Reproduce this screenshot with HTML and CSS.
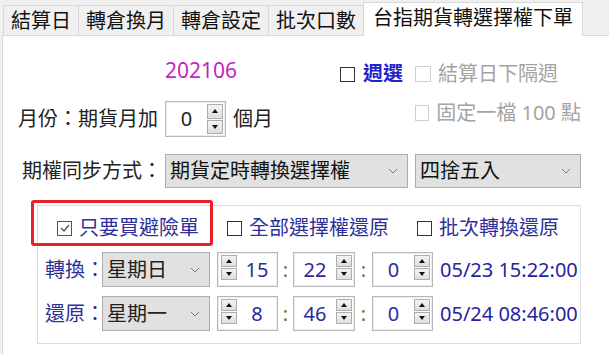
FILE: index.html
```html
<!DOCTYPE html>
<html lang="zh-Hant">
<head>
    <meta charset="UTF-8">
    <title>台指期貨轉選擇權下單</title>
    <link rel="stylesheet" href="styles.css">
</head>
<body>
    <div class="tabs">
        <div class="tab first">結算日</div>
        <div class="tab">轉倉換月</div>
        <div class="tab">轉倉設定</div>
        <div class="tab">批次口數</div>
        <div class="tab active">台指期貨轉選擇權下單</div>
    </div>

    <div class="panel">
        <div class="row row-a">
            <div class="col1"></div>
            <div class="col2 split">
                <span class="month">202106</span>
                <label class="check weekly"><span class="cb"></span>週選</label>
            </div>
            <div class="col3">
                <label class="check disabled"><span class="cb"></span>結算日下隔週</label>
            </div>
        </div>

        <div class="row row-b">
            <div class="col1 label-month">月份：期貨月加</div>
            <div class="col2 inline">
                <div class="spin spin-top">
                    <span class="spin-value">0</span>
                    <div class="spin-btns">
                        <span class="spin-btn"><i class="up"></i></span>
                        <span class="spin-btn"><i class="down"></i></span>
                    </div>
                </div>
                <span class="unit">個月</span>
            </div>
            <div class="col3 top">
                <label class="check disabled"><span class="cb"></span>固定一檔 100 點</label>
            </div>
        </div>

        <div class="row row-c">
            <div class="col1 label-sync">期權同步方式：</div>
            <div class="col2">
                <div class="select">
                    <span>期貨定時轉換選擇權</span>
                    <svg width="10" height="6" viewBox="0 0 10 6"><polyline points="1,1 5,5 9,1" fill="none" stroke="#7a7a7a" stroke-width="1"/></svg>
                </div>
            </div>
            <div class="col3">
                <div class="select">
                    <span>四捨五入</span>
                    <svg width="10" height="6" viewBox="0 0 10 6"><polyline points="1,1 5,5 9,1" fill="none" stroke="#7a7a7a" stroke-width="1"/></svg>
                </div>
            </div>
        </div>

        <div class="group">
            <div class="highlight"></div>
            <div class="checks">
                <label class="check item-a"><span class="cb checked"><svg width="12" height="12" viewBox="0 0 12 12"><polyline points="2,6 5,9 10,3" fill="none" stroke="#555" stroke-width="1.4"/></svg></span>只要買避險單</label>
                <label class="check item-b"><span class="cb"></span>全部選擇權還原</label>
                <label class="check"><span class="cb"></span>批次轉換還原</label>
            </div>

            <div class="time-row first-row">
                <span class="time-label">轉換：</span>
                <div class="select day">
                    <span>星期日</span>
                    <svg width="10" height="6" viewBox="0 0 10 6"><polyline points="1,1 5,5 9,1" fill="none" stroke="#7a7a7a" stroke-width="1"/></svg>
                </div>
                <div class="spin spin-left">
                    <div class="spin-btns">
                        <span class="spin-btn"><i class="up"></i></span>
                        <span class="spin-btn"><i class="down"></i></span>
                    </div>
                    <span class="spin-value">15</span>
                </div>
                <span class="colon">:</span>
                <div class="spin spin-mid">
                    <span class="spin-value">22</span>
                    <div class="spin-btns">
                        <span class="spin-btn"><i class="up"></i></span>
                        <span class="spin-btn"><i class="down"></i></span>
                    </div>
                </div>
                <span class="colon wide">:</span>
                <div class="spin spin-sec">
                    <span class="spin-value">0</span>
                    <div class="spin-btns">
                        <span class="spin-btn"><i class="up"></i></span>
                        <span class="spin-btn"><i class="down"></i></span>
                    </div>
                </div>
                <span class="stamp">05/23 15:22:00</span>
            </div>

            <div class="time-row">
                <span class="time-label">還原：</span>
                <div class="select day">
                    <span>星期一</span>
                    <svg width="10" height="6" viewBox="0 0 10 6"><polyline points="1,1 5,5 9,1" fill="none" stroke="#7a7a7a" stroke-width="1"/></svg>
                </div>
                <div class="spin spin-left">
                    <div class="spin-btns">
                        <span class="spin-btn"><i class="up"></i></span>
                        <span class="spin-btn"><i class="down"></i></span>
                    </div>
                    <span class="spin-value">8</span>
                </div>
                <span class="colon">:</span>
                <div class="spin spin-mid">
                    <span class="spin-value">46</span>
                    <div class="spin-btns">
                        <span class="spin-btn"><i class="up"></i></span>
                        <span class="spin-btn"><i class="down"></i></span>
                    </div>
                </div>
                <span class="colon wide">:</span>
                <div class="spin spin-sec">
                    <span class="spin-value">0</span>
                    <div class="spin-btns">
                        <span class="spin-btn"><i class="up"></i></span>
                        <span class="spin-btn"><i class="down"></i></span>
                    </div>
                </div>
                <span class="stamp">05/24 08:46:00</span>
            </div>
        </div>
    </div>
</body>
</html>
```

FILE: styles.css
```css
body {
    margin: 0;
    background: #f0f0f0;
    font-family: "Noto Sans", "Noto Sans CJK TC", sans-serif;
    font-size: 20px;
    line-height: 24px;
    color: #222;
}
.tabs {
    display: flex;
    align-items: flex-end;
    height: 35px;
    padding-left: 3px;
}
.tab {
    height: 29px;
    padding: 0 7px;
    display: flex;
    align-items: center;
    background: #f0f0f0;
    border-top: 1px solid #d9d9d9;
    border-right: 1px solid #d9d9d9;
    color: #111;
}
.tab.first {
    border-left: 1px solid #d9d9d9;
}
.tab.active {
    height: 30px;
    margin-left: -1px;
    margin-bottom: -1px;
    padding: 0 9px 3px;
    background: #fff;
    border-left: 1px solid #d9d9d9;
    position: relative;
}
.panel {
    margin-left: 2px;
    height: 319px;
    box-sizing: border-box;
    padding-top: 25px;
    background: #fff;
    border-top: 1px solid #d9d9d9;
    border-left: 1px solid #d9d9d9;
}
.row {
    display: flex;
}
.col1 {
    width: 162px;
    box-sizing: border-box;
    white-space: nowrap;
}
.col2 {
    width: 243px;
}
.col3 {
    width: 166px;
    margin-left: 7px;
}
.row-a {
    height: 26px;
    align-items: center;
}
.split {
    display: flex;
    justify-content: space-between;
    align-items: center;
    padding-right: 5px;
    box-sizing: border-box;
}
.month {
    color: #c424c4;
    font-size: 21px;
    margin-bottom: 8px;
}
.check {
    display: flex;
    align-items: center;
    gap: 7px;
    white-space: nowrap;
}
.cb {
    width: 15px;
    height: 15px;
    box-sizing: border-box;
    border: 1.5px solid #333;
    background: #fff;
    display: flex;
    align-items: center;
    justify-content: center;
}
.cb.checked {
    border-color: #555;
}
.weekly {
    gap: 8px;
    color: #2323c8;
    font-weight: 600;
}
.check.disabled {
    color: #a3a3a3;
}
.check.disabled .cb {
    border: 1px solid #cfcfcf;
    width: 16px;
    height: 16px;
}
.row-b {
    height: 36px;
    margin-top: 14px;
    align-items: center;
}
.label-month {
    padding-left: 15px;
}
.inline {
    display: flex;
    align-items: center;
    height: 100%;
}
.unit {
    margin-left: 7px;
}
.top {
    align-self: flex-start;
}
.row-c {
    height: 34px;
    margin-top: 17px;
    align-items: center;
}
.label-sync {
    padding-left: 19px;
}
.row-c .col2, .row-c .col3 {
    height: 100%;
}
.select {
    height: 100%;
    box-sizing: border-box;
    display: flex;
    align-items: center;
    justify-content: space-between;
    padding: 0 9px 0 4px;
    background: #e1e1e1;
    border: 1px solid #adadad;
    color: #111;
    white-space: nowrap;
}
.spin {
    height: 100%;
    box-sizing: border-box;
    display: flex;
    align-items: center;
    border: 1px solid #b8b8b8;
    box-shadow: inset 0 0 0 1px #ececec;
    background: #fff;
}
.spin-value {
    flex: 1;
    text-align: center;
}
.spin-btns {
    display: flex;
    flex-direction: column;
    gap: 1px;
    width: 16px;
    height: 30px;
}
.spin-btn {
    flex: 1;
    display: flex;
    align-items: center;
    justify-content: center;
    border: 1px solid #adadad;
    background: linear-gradient(#f4f4f4, #dedede);
}
.up, .down {
    width: 0;
    height: 0;
    border-left: 3.5px solid transparent;
    border-right: 3.5px solid transparent;
}
.up {
    border-bottom: 4px solid #111;
}
.down {
    border-top: 4px solid #111;
}
.spin-top {
    width: 61px;
    padding-right: 2px;
}
.group {
    position: relative;
    margin: 17px 0 0 34px;
    width: 544px;
    height: 139px;
    box-sizing: border-box;
    padding-top: 10px;
    border: 1px solid #dcdcdc;
    color: #2f2f98;
}
.highlight {
    position: absolute;
    left: -7px;
    top: -6px;
    width: 182px;
    height: 46px;
    box-sizing: border-box;
    border: 3px solid #e8202a;
    border-radius: 3px;
}
.checks {
    display: flex;
    align-items: center;
    height: 24px;
    padding-left: 19px;
    gap: 28px;
}
.time-row {
    display: flex;
    align-items: center;
    height: 35px;
    margin-top: 9px;
    padding-left: 7px;
    white-space: nowrap;
}
.time-row.first-row {
    margin-top: 12px;
}
.time-label {
    width: 57px;
}
.select.day {
    width: 108px;
    margin-right: 7px;
    color: #222;
}
.time-row .spin {
    color: #2a2aa0;
}
.time-row .spin-btns {
    height: 25px;
    align-self: flex-start;
    margin-top: 2px;
}
.spin-left {
    width: 61px;
    padding-left: 3px;
}
.spin-mid {
    width: 62px;
    padding-right: 2px;
}
.spin-sec {
    width: 61px;
    padding-right: 2px;
}
.colon {
    width: 15px;
    text-align: center;
    color: #8c6d1f;
}
.colon.wide {
    width: 17px;
}
.stamp {
    margin-left: 7px;
    color: #2525a0;
}
```
